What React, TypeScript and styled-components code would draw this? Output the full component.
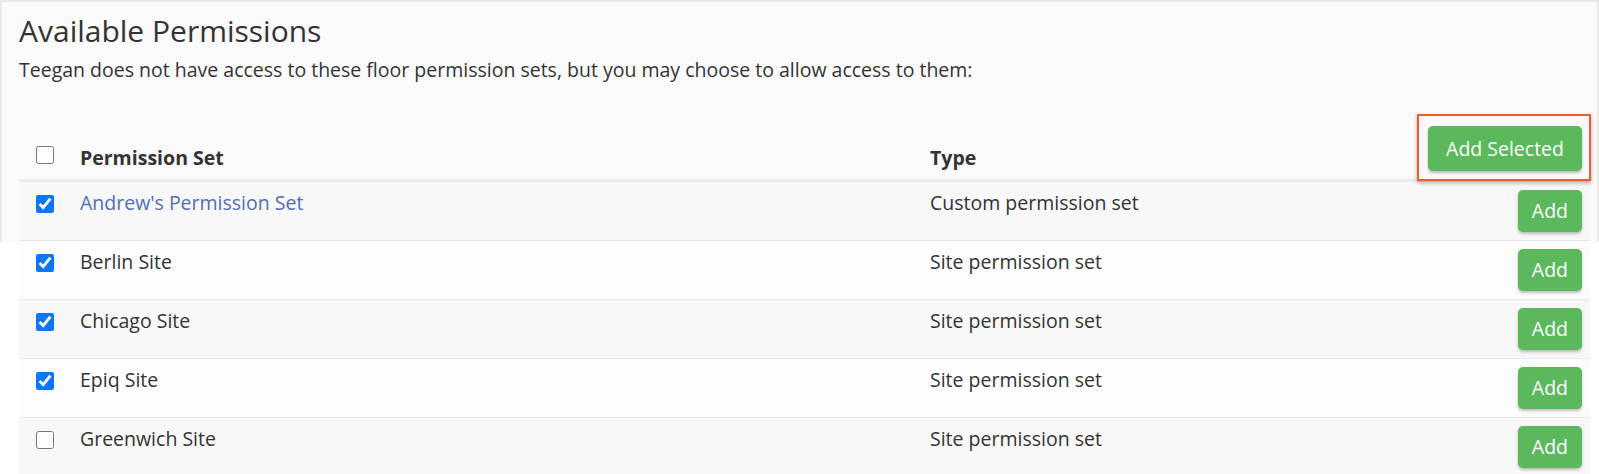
import styled, { createGlobalStyle } from 'styled-components';
import { useState } from 'react';

const GlobalStyle = createGlobalStyle`
  body {
    margin: 0;
    background: #ffffff;
    font-family: "Open Sans", "Liberation Sans", sans-serif;
    color: #333333;
  }
`;

const Panel = styled.div`
  position: relative;
  isolation: isolate;
  padding: 14px 9px 20px 19px;

  &::before {
    content: '';
    position: absolute;
    left: 0;
    top: 0;
    right: 0;
    height: 240px;
    background: #fafafa;
    border: solid #e9e9e9;
    border-width: 2px 2px 0 2px;
    z-index: -1;
  }
`;

const Title = styled.h2`
  margin: 0 0 10px;
  font-size: 30px;
  line-height: 33px;
  font-weight: 400;
  color: #333333;
`;

const Intro = styled.p`
  margin: 0 0 35px;
  font-size: 19.5px;
  line-height: 25.7px;
`;

const Table = styled.table`
  width: 100%;
  border-collapse: collapse;
  table-layout: fixed;
  font-size: 19.5px;
  line-height: 25.7px;
`;

const HeadCell = styled.th<{ $align?: 'left' | 'right' }>`
  padding: 8px;
  text-align: ${(p) => p.$align ?? 'left'};
  vertical-align: bottom;
  font-weight: 700;
  border-bottom: 3px solid #ececec;
`;

const Row = styled.tr<{ $striped: boolean }>`
  background: ${(p) => (p.$striped ? '#f8f8f8' : '#fdfdfd')};
`;

const Cell = styled.td<{ $align?: 'left' | 'right' }>`
  padding: 8px;
  text-align: ${(p) => p.$align ?? 'left'};
  vertical-align: top;
  border-top: 1px solid #e8e8e8;
`;

const CheckCell = styled.td`
  padding: 13px 8px 8px 17px;
  vertical-align: top;
  border-top: 1px solid #e8e8e8;
`;

const CheckHead = styled.th`
  padding: 8px 8px 15px 17px;
  vertical-align: bottom;
  border-bottom: 3px solid #ececec;
`;

const Check = styled.input.attrs({ type: 'checkbox' })`
  display: block;
  width: 18px;
  height: 18px;
  margin: 0;
  accent-color: #0b76f7;
`;

const NameLink = styled.a`
  color: #4e6fb6;
  text-decoration: none;
  cursor: pointer;
`;

const Button = styled.button<{ $size?: 'lg' | 'md' }>`
  font-family: "Open Sans", "Liberation Sans", sans-serif;
  font-size: 19.5px;
  line-height: ${(p) => (p.$size === 'lg' ? '25px' : '26px')};
  padding: ${(p) => (p.$size === 'lg' ? '10px 18px' : '8px 14px')};
  color: #ffffff;
  background: #5cb85c;
  border: none;
  border-radius: 5px;
  box-shadow: 0 2px 3px rgba(0, 0, 0, 0.25);
  cursor: pointer;
`;

const Highlight = styled.span`
  position: relative;
  display: inline-block;

  &::after {
    content: '';
    position: absolute;
    top: -12px;
    right: -9px;
    bottom: -10px;
    left: -11px;
    border: 2px solid #ef5a2c;
    box-shadow: 0 2px 4px rgba(0, 0, 0, 0.3);
    pointer-events: none;
  }
`;

type PermissionSet = {
  name: string;
  type: string;
  link?: boolean;
  checked: boolean;
};

const initial: PermissionSet[] = [
  { name: "Andrew's Permission Set", type: 'Custom permission set', link: true, checked: true },
  { name: 'Berlin Site', type: 'Site permission set', checked: true },
  { name: 'Chicago Site', type: 'Site permission set', checked: true },
  { name: 'Epiq Site', type: 'Site permission set', checked: true },
  { name: 'Greenwich Site', type: 'Site permission set', checked: false },
];

export default function App() {
  const [sets, setSets] = useState(initial);
  const [all, setAll] = useState(false);

  const toggle = (i: number) =>
    setSets((prev) => prev.map((s, j) => (j === i ? { ...s, checked: !s.checked } : s)));

  return (
    <>
      <GlobalStyle />
      <Panel>
        <Title>Available Permissions</Title>
        <Intro>
          Teegan does not have access to these floor permission sets, but you may choose to allow
          access to them:
        </Intro>
        <Table>
          <colgroup>
            <col style={{ width: 53 }} />
            <col style={{ width: 850 }} />
            <col />
            <col style={{ width: 200 }} />
          </colgroup>
          <thead>
            <tr>
              <CheckHead>
                <Check checked={all} onChange={() => setAll((v) => !v)} />
              </CheckHead>
              <HeadCell>Permission Set</HeadCell>
              <HeadCell>Type</HeadCell>
              <HeadCell $align="right">
                <Highlight>
                  <Button $size="lg">Add Selected</Button>
                </Highlight>
              </HeadCell>
            </tr>
          </thead>
          <tbody>
            {sets.map((s, i) => (
              <Row key={s.name} $striped={i % 2 === 0}>
                <CheckCell>
                  <Check checked={s.checked} onChange={() => toggle(i)} />
                </CheckCell>
                <Cell>{s.link ? <NameLink>{s.name}</NameLink> : s.name}</Cell>
                <Cell>{s.type}</Cell>
                <Cell $align="right">
                  <Button>Add</Button>
                </Cell>
              </Row>
            ))}
          </tbody>
        </Table>
      </Panel>
    </>
  );
}
